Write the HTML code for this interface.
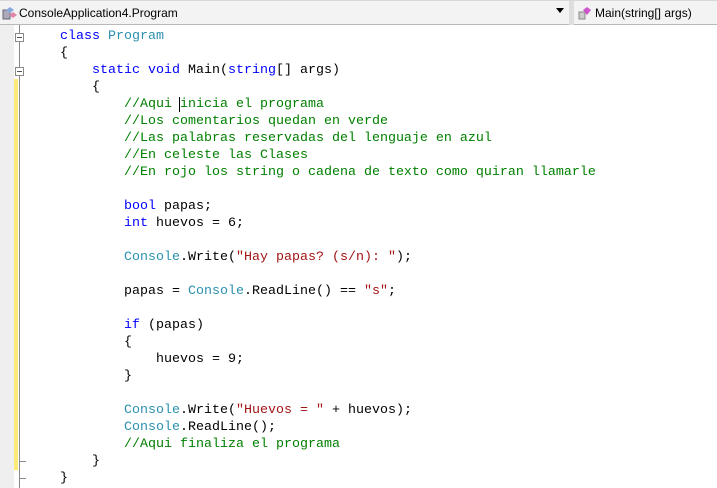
<!DOCTYPE html>
<html><head><style>
body{margin:0;width:717px;height:488px;overflow:hidden;background:#fff;position:relative;font-family:"Liberation Sans",sans-serif}
.hdr{position:absolute;left:0;top:0;width:717px;height:25px;background:#f3f3f3;border-bottom:1px solid #b9b9b9;border-top:1px solid #d8d8d8;box-sizing:border-box}
.gut{position:absolute;left:0;top:25px;width:14px;height:463px;background:#efefef}
.yb{position:absolute;left:14px;top:79px;width:4px;height:391px;background:#fbe97a}
.ol{position:absolute;left:19px;top:25px;width:1px;height:463px;background:#8a8a8a}
.bx{position:absolute;left:15px;width:7px;height:7px;border:1px solid #8a8a8a;background:#fff}
.bx:after{content:"";position:absolute;left:1px;top:3px;width:5px;height:1px;background:#555}
.tk{position:absolute;left:20px;width:6px;height:1px;background:#8a8a8a}
pre{position:absolute;left:60px;top:28px;margin:0;font-family:"Liberation Mono",monospace;font-size:13.33px;line-height:17px;color:#000}
.k{color:#0000ff}.t{color:#2b91af}.c{color:#008000}.s{color:#a31515}
</style></head><body>
<div class="hdr">
<div style="position:absolute;left:2px;top:4px;width:14px;height:14px"><svg width="16" height="16"><rect x="1" y="5" width="7" height="9" fill="#aab" stroke="#667"/><path d="M8 2l4 3-4 3-4-3z" fill="#8ad"/><path d="M11 7l4 3-4 3-4-3z" fill="#d8a"/></svg></div>
<span style="position:absolute;left:19px;top:5px;font-size:12px;color:#000">ConsoleApplication4.Program</span>
<span style="position:absolute;left:556px;top:7px;width:0;height:0;border-left:4px solid transparent;border-right:4px solid transparent;border-top:5px solid #000"></span>
<div style="position:absolute;left:569px;top:0;width:5px;height:24px;background:#dedede"></div>
<div style="position:absolute;left:578px;top:4px"><svg width="16" height="16"><rect x="1" y="7" width="6" height="7" fill="#ccc" stroke="#888"/><path d="M9 2l4 3-4 5-4-5z" fill="#c5c"/></svg></div>
<span style="position:absolute;left:595px;top:5px;font-size:12px;color:#000">Main(string[] args)</span>
</div>
<div class="gut"></div><div class="yb"></div><div class="ol"></div>
<div class="bx" style="top:33px"></div><div class="bx" style="top:67px"></div>
<div class="tk" style="top:461px"></div><div class="tk" style="top:478px"></div>
<pre><span class="k">class</span> <span class="t">Program</span>
{
    <span class="k">static</span> <span class="k">void</span> Main(<span class="k">string</span>[] args)
    {
        <span class="c">//Aqui <span style="border-left:1px solid #000;margin-left:-1px">i</span>nicia el programa</span>
        <span class="c">//Los comentarios quedan en verde</span>
        <span class="c">//Las palabras reservadas del lenguaje en azul</span>
        <span class="c">//En celeste las Clases</span>
        <span class="c">//En rojo los string o cadena de texto como quiran llamarle</span>

        <span class="k">bool</span> papas;
        <span class="k">int</span> huevos = 6;

        <span class="t">Console</span>.Write(<span class="s">"Hay papas? (s/n): "</span>);

        papas = <span class="t">Console</span>.ReadLine() == <span class="s">"s"</span>;

        <span class="k">if</span> (papas)
        {
            huevos = 9;
        }

        <span class="t">Console</span>.Write(<span class="s">"Huevos = "</span> + huevos);
        <span class="t">Console</span>.ReadLine();
        <span class="c">//Aqui finaliza el programa</span>
    }
}</pre>
</body></html>
